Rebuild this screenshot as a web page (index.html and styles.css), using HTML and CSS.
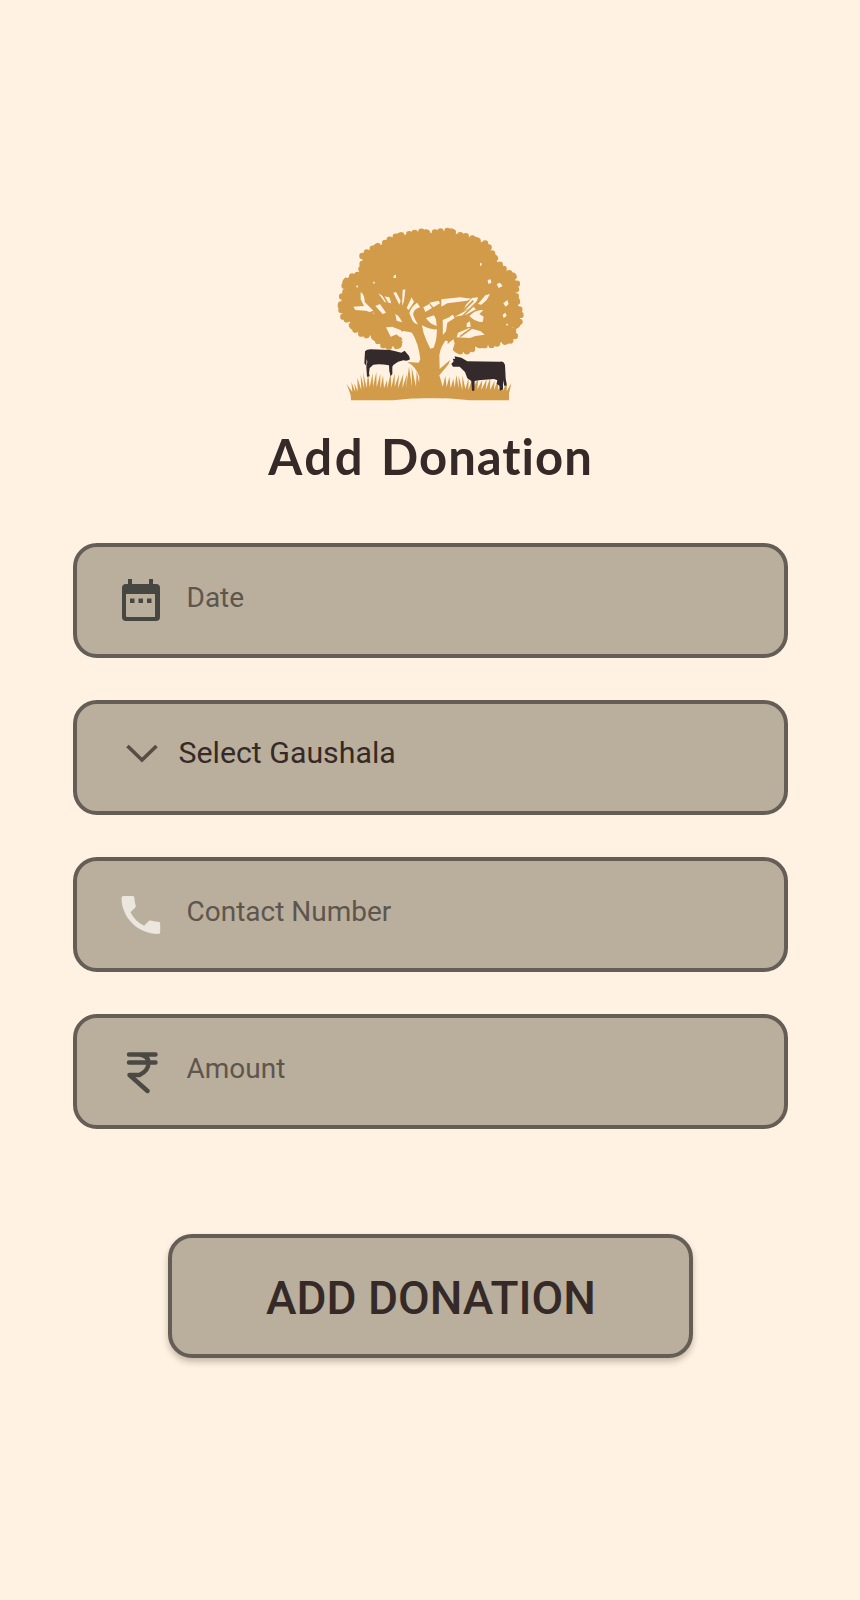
FILE: index.html
```html
<!DOCTYPE html>
<html lang="en">
<head>
<meta charset="utf-8">
<title>Add Donation</title>
<link rel="stylesheet" href="styles.css">
</head>
<body>
<main class="page">
  <svg class="logo" viewBox="0 0 600 570" aria-hidden="true">
    <g class="gold">
      <path class="crown" d="M40 290L32 262L36 230L50 210L42 194L55 172L82 166L98 142L97 108L120 90L144 78L170 67L188 52L218 45L245 42L267 34L300 39L335 34L358 32L385 44L415 50L438 60L470 72L486 100L500 124L524 150L550 168L561 190L556 222L562 250L572 280L568 310L545 325L556 345L548 360L515 367L480 376L445 375L425 388L405 396L380 392L350 350L300 330L240 320L215 350L212 376L180 381L155 374L130 348L98 344L72 326L60 306Z"/>
    </g>
    <g class="cream">
      <path d="M92 216Q104 224 104 246L128 270L136 282L108 272L76 270L70 260L102 258L92 238Z"/>
      <path d="M145 220L160 229L178 232L184 250L164 246ZM136 258L150 252L168 278L158 282ZM190 218L198 216L212 242L208 254ZM218 210L226 208L222 244L216 258Z"/>
      <path d="M245 232L252 246L236 270L230 264ZM238 280Q242 260 262 248L270 262Q248 268 250 286Q260 312 272 322L260 320Q244 300 238 280Z"/>
      <path d="M280 262L298 252L306 264L286 276ZM298 248L326 242L330 250L310 262ZM288 294L312 286L318 298L320 318Q296 310 288 294ZM334 238L390 232L424 236L412 242L352 250L334 260Z"/>
      <path d="M196 282L214 292L224 309L200 302ZM168 322L190 320L212 330L208 340L182 350ZM188 334L212 330L222 345L210 352Z"/>
      <path d="M218 333L240 335Q260 354 264 380L271 421L242 405L230 390L214 387L218 360L210 345Z"/>
      <path d="M276 316Q300 330 321 328L320 366Q316 380 306 388Q280 362 276 316Z"/>
      <path d="M338 300L358 292L368 282L374 294L352 308L348 334L338 346ZM374 290L430 260L438 268L408 284Z"/>
      <path d="M426 234L444 232L438 252L424 264L400 272L408 254ZM444 252L466 226L480 222L470 240L454 254Z"/>
      <path d="M418 288Q436 268 460 270L448 282L461 290L458 306Q436 306 418 288ZM410 310L420 304L422 320L410 322ZM384 338L418 324L452 334L464 344L436 348L420 354L380 352Z"/>
      <path d="M370 358L374 370L368 390L382 402L360 420L330 440L329 410Q345 374 370 358Z"/>
      <path d="M500 192L510 188L518 198L506 204ZM473 180L482 178L484 188L475 192ZM520 250L532 240L536 252L527 260ZM518 284L526 278L530 287L521 294ZM450 130L454 128L455 136L450 138ZM192 166L198 164L198 174L190 174ZM78 198L84 196L82 205ZM130 184L136 188L130 192ZM527 314L532 310L534 318Z"/>
    </g>
    <g class="twigs">
      <path d="M154 218L176 254L206 282M98 285L130 275L162 300M180 214L204 260M386 300L458 230M390 350L434 318L462 328M352 288L404 268L430 242"/>
    </g>
    <g class="gold">
      <path d="M184 236Q210 262 228 288Q248 310 266 314L260 290L269 286Q276 340 301 386L311 383Q324 356 321 290L336 290L338 348Q360 330 380 302L390 304Q372 332 354 352Q332 377 328 405L329 447L360 420L356 432L328 466L336 492L340 535H250Q270 500 268 470Q258 440 232 426L266 428L271 418Q266 370 246 338L214 330L186 320L218 320Q222 308 200 282Z"/>
      <path d="M63 541L62 525L50 492L67 516L64 486L76 516L73 490L83 514L82 473L94 510L92 464L103 507L99 456L110 504L114 455L119 502L128 459L129 500L139 456L140 502L151 461L151 506L159 466L162 505L171 480L172 505L182 459L184 503L194 460L194 501L207 463L204 505L220 461L217 505L231 462L228 505L237 440L246 500L245 442L258 500L260 452L270 502L280 470L325 470L338 500L346 468L350 501L358 470L362 505L370 476L374 503L379 465L386 506L386 468L397 510L397 466L406 507L416 474L415 510L428 474L426 510L445 474L442 508L457 480L454 510L470 478L467 510L481 474L480 510L494 482L492 510L504 480L504 510L516 492L519 512L531 484L530 514L544 490L537 522V541H420Q300 526 190 541Z"/>
    </g>
    <g class="cow">
      <path d="M105 394Q110 388 122 388L180 390Q196 393 214 398L224 392L232 402Q240 408 240 418Q232 425 220 421Q204 423 190 435L187 440L187 462L182 469L178 454L177 436Q150 431 130 434L119 444L117 460L119 469L111 470L109 442L112 425L110 417L109 438L103 430Z"/>
      <path d="M364 432L371 424L368 416L375 417L374 409L394 413L412 424L510 425Q521 423 525 435L527 474L530 496L523 498L519 481V508L510 512L508 497L500 491L502 481L492 477L445 481L434 483L433 512H426L424 483L412 475L405 456L389 440L369 440Z"/>
    </g>
  </svg>

  <h1 class="title"><span>Add</span><span>Donation</span></h1>

  <form class="form">
    <label class="field">
      <svg class="icon" viewBox="0 0 46 46"><path fill="#464742" d="M7 1h4v5h17V1h4v5h3q4 0 4 4v29q0 4-4 4H5q-4 0-4-4V10q0-4 4-4h2zM5 16v22q0 1 1 1h28V16zM9 20.500h4.500v4.500H9zm8.500 0h4.500v4.500h-4.500zm8.500 0h4.500v4.500h-4.500z" fill-rule="evenodd"/></svg>
      <span class="hint">Date</span>
    </label>
    <label class="field">
      <svg class="icon soft" viewBox="0 0 46 46"><path d="M6.500 11L21 25L35.500 11" fill="none" stroke="#574d45" stroke-width="3.600"/></svg>
      <span class="choice">Select Gaushala</span>
    </label>
    <label class="field">
      <svg class="icon" viewBox="0 0 46 46"><path fill="#ebe7df" d="M2.500 4h9q2 0 2 2c0 3 .5 5 1.200 7.500q.4 1.300-.7 2.300L9.500 20.300c3 6 7.500 10.500 13.500 13.500l4.500-4.500q1-1 2.300-.7c2.500.8 5 1.200 7.500 1.200q1.900 0 1.900 2v8.200q0 2-2 2C17 42 .5 25.500 .5 6q0-2 2-2z"/></svg>
      <span class="hint">Contact Number</span>
    </label>
    <label class="field">
      <svg class="icon soft" viewBox="0 0 46 46"><path d="M8 5.500H34.500M8 13.500H34.500M18.500 5.500Q27.500 6.500 27.500 14T18.500 26H8.500L26.500 42" fill="none" stroke="#4c4943" stroke-width="4.400" stroke-linecap="round" stroke-linejoin="round"/></svg>
      <span class="hint">Amount</span>
    </label>
    <button class="submit" type="button">ADD DONATION</button>
  </form>
</main>
</body>
</html>
```
FILE: styles.css
```css
* { box-sizing: border-box; }
body { margin: 0; background: #fff2e2; color: #352a27; font-family: Roboto, sans-serif; }
.page { min-height: 1600px; padding-top: 220px; display: flex; flex-direction: column; align-items: center; }
.logo { width: 200px; height: 190px; display: block; }
.gold { fill: #d29b49; }
.crown { stroke: #d29b49; stroke-width: 19; stroke-linecap: round; stroke-dasharray: 0 21 0 13 4 24 0 17; }
.cream { fill: #fff2e2; }
.twigs { fill: none; stroke: #d29b49; stroke-width: 5; }
.cow { fill: #352a2b; }
.title { display: flex; gap: 16px; margin: 16px 0 0 1px; height: 60px; line-height: 60px; font-family: Lato, sans-serif; font-size: 49px; font-weight: 700; letter-spacing: 1px; }
.title span:first-child { letter-spacing: 2.6px; }
.form { width: 715px; margin-top: 57px; display: flex; flex-direction: column; align-items: center; gap: 42px; }
.field { width: 100%; height: 115px; padding: 0 44px; display: flex; align-items: center; border: 4px solid #655e57; border-radius: 24px; background: #baaf9c; }
.icon { width: 46px; height: 46px; flex: none; }
.soft { filter: blur(0.7px); }
.hint { margin-left: 20px; padding-bottom: 5px; font-size: 28px; line-height: 34px; color: #5e564d; }
.choice { margin-left: 12px; padding-bottom: 9px; font-size: 30.3px; line-height: 36px; }
.submit { width: 525px; height: 124px; margin: 63px 0 0 1px; padding: 4px 0 0 1px; border: 4px solid #655e57; border-radius: 24px; background: #baaf9c; color: #352a27; font: 500 46px Roboto, sans-serif; box-shadow: 0 4px 6px rgba(70, 55, 40, 0.3); }
```
